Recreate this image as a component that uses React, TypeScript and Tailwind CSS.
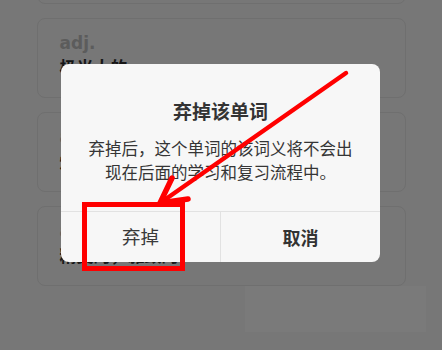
import React from 'react';

const cards = [
  { pos: 'adj.', text: '极光大的' },
  { pos: 'adj.', text: '灿烂的，光辉的' },
  { pos: 'adj.', text: '精美的，雅致的' },
];

const WordCard: React.FC<{ pos?: string; text?: string }> = ({ pos, text }) => (
  <div className="h-[80px] rounded-[8px] border border-[#6f6f6f] px-[22px] pt-[14px]">
    {pos && <p className="text-[17px] leading-[20px] font-bold text-[#5c5c5c] font-['DejaVu_Sans',sans-serif]">{pos}</p>}
    {text && <p className="mt-[2px] text-[17px] leading-[24px] font-bold text-[#161616]">{text}</p>}
  </div>
);

const App: React.FC = () => {
  return (
    <div className="relative w-[442px] h-[350px] overflow-hidden bg-[#777777] font-['Noto_Sans_CJK_SC','Noto_Sans',sans-serif]">
      <div className="mx-auto w-[369px] -mt-[76px] flex flex-col gap-[14px]">
        <WordCard />
        {cards.map((c, i) => (
          <WordCard key={i} pos={c.pos} text={c.text} />
        ))}
      </div>

      {/* faint watermark patch */}
      <div className="absolute left-[245px] top-[286px] w-[181px] h-[46px] bg-white/[0.025]" />

      {/* dialog */}
      <div className="absolute left-[61px] top-[64px] w-[319px] h-[198px] rounded-[8px] bg-[#f7f7f7] flex flex-col">
        <h2 className="pt-[33px] text-center text-[19px] leading-[28px] font-bold text-[#333333]">弃掉该单词</h2>
        <div className="mt-[11px] text-center text-[16.5px] leading-[24px] text-[#353535]">
          <p>弃掉后，这个单词的该词义将不会出</p>
          <p>现在后面的学习和复习流程中。</p>
        </div>
        <div className="mt-auto h-[51px] flex border-t border-[#e2e2e2]">
          <button className="flex-1 text-[18.5px] text-[#3a3a3a]">弃掉</button>
          <button className="flex-1 border-l border-[#e2e2e2] text-[18px] font-bold text-[#333333]">取消</button>
        </div>
      </div>

      {/* red annotation */}
      <svg className="absolute inset-0" width="442" height="350" viewBox="0 0 442 350">
        <rect x="84.5" y="204.5" width="98" height="64" fill="none" stroke="#ff0000" strokeWidth="5" />
        <line x1="346" y1="73" x2="163" y2="201" stroke="#ff0000" strokeWidth="4.5" strokeLinecap="round" />
        <polyline points="172,178 160,203 188,199" fill="none" stroke="#ff0000" strokeWidth="5.5" strokeLinejoin="miter" strokeLinecap="round" />
      </svg>
    </div>
  );
};

export default App;
